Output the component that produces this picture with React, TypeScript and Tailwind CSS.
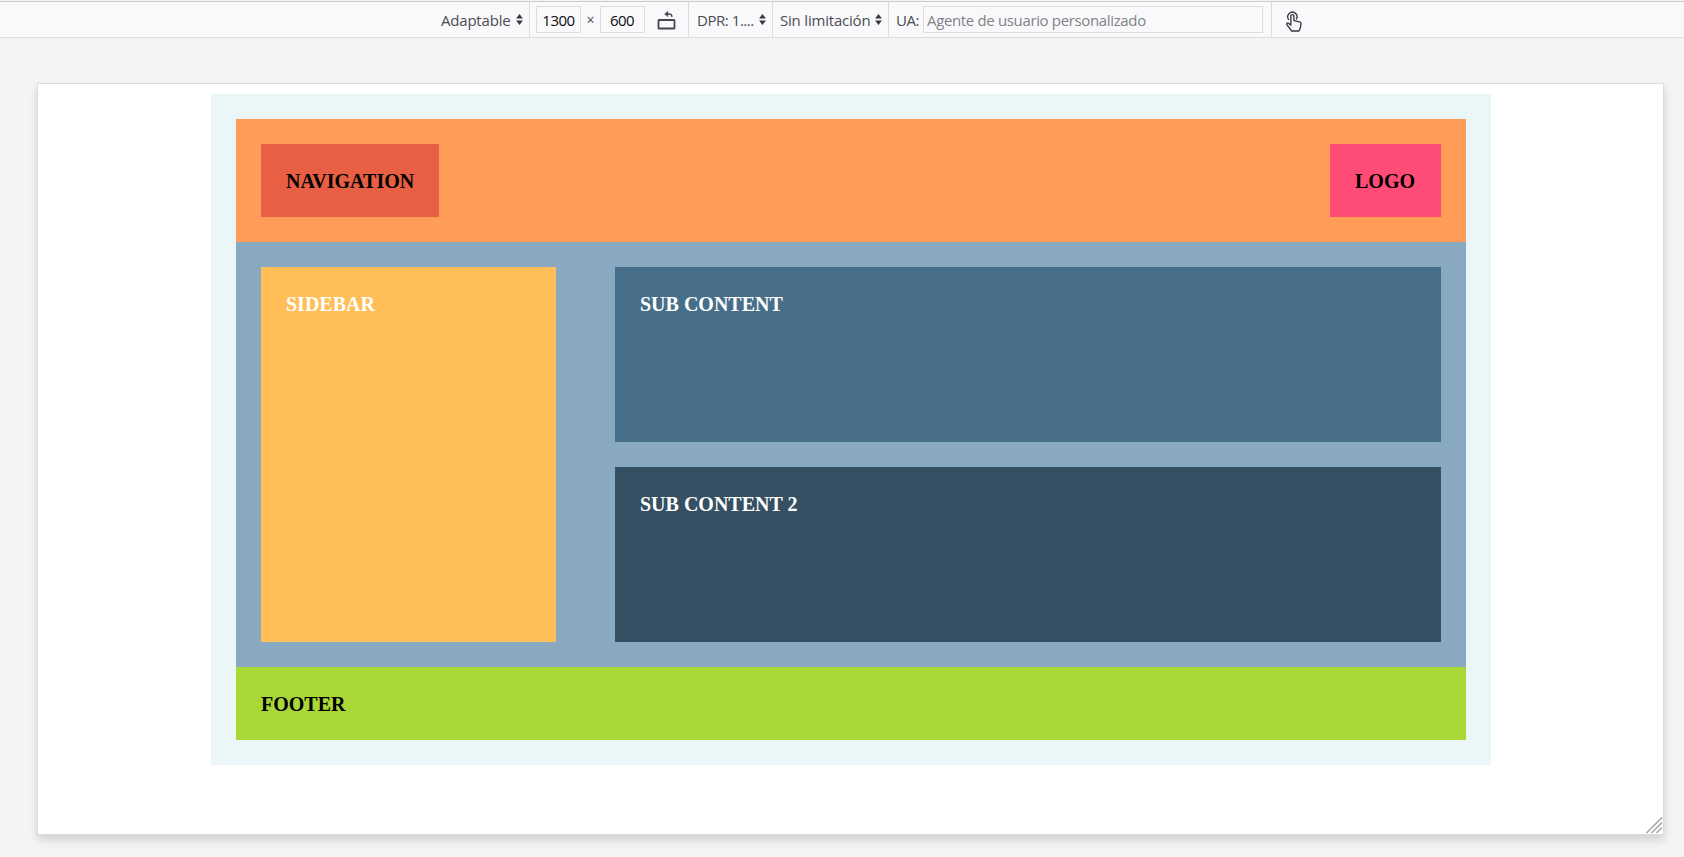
import React from 'react';

function SortArrows() {
  return (
    <svg className="w-[7px] h-[11px] shrink-0" viewBox="0 0 7 11" fill="#38383d">
      <path d="M3.5 0 6.9 4.4H.1zM3.5 11 .1 6.6h6.8z" />
    </svg>
  );
}

function RotateIcon() {
  return (
    <svg className="w-[19px] h-[19px]" viewBox="0 0 19 19" fill="none" stroke="#46464b">
      <rect x="1.5" y="9" width="16" height="8.5" rx="0.6" strokeWidth="1.8" />
      <path d="M9 3h3.2c1.9 0 2.8 1 2.8 3" strokeWidth="1.3" />
      <path d="M10.8.4 7.6 3l3.2 2.6z" fill="#46464b" strokeWidth=".5" />
    </svg>
  );
}

function TouchIcon() {
  return (
    <svg className="w-4 h-[21px]" viewBox="0 0 16 21" fill="none" stroke="#38383d" strokeWidth="1.35" strokeLinejoin="round" strokeLinecap="round">
      <path d="M2.6 8.4A4.6 4.6 0 1 1 10.4 8" />
      <path d="M4.9 13.3V5.1a1.5 1.5 0 0 1 3 0v4.6l5.7 1.2c1 .2 1.5.8 1.4 1.8l-.7 4.3-1.4 3H5.7L1 13.8c-.9-1.2.5-2.4 1.6-1.5l2.3 1.9" />
    </svg>
  );
}

function Resizer() {
  return (
    <svg className="absolute right-0 bottom-0 h-[17px] w-[17px]" viewBox="0 0 17 17" stroke="#a4a4a2" strokeWidth="1.5">
      <path d="M.5 16 16 .5M5.5 16 16 5.5M10.5 16 16 10.5" />
    </svg>
  );
}

function Toolbar() {
  return (
    <div className="mt-px flex h-[37px] items-stretch border-t border-b border-t-[#cbcbcb] border-b-[#dddde0] bg-[#f9f9fb] pl-[441px] font-['Open_Sans','Noto_Sans',sans-serif] text-[15px] leading-5 whitespace-nowrap text-[#4c4c50]">
      <div className="flex w-[89px] items-center border-r border-[#dddde0]">
        <span className="w-[75px] tracking-[-0.2px]">Adaptable</span>
        <SortArrows />
      </div>
      <div className="flex w-[159px] items-center border-r border-[#dddde0] pl-1.5">
        <span className="flex h-[27px] w-[45px] items-center justify-center border border-[#dddde0] tracking-[-0.5px] text-[#0c0c0d]">1300</span>
        <span className="w-[19px] text-center text-[14px]">×</span>
        <span className="flex h-[27px] w-[45px] items-center justify-center border border-[#dddde0] pr-px tracking-[-0.6px] text-[#0c0c0d]">600</span>
        <span className="mt-0.5 ml-3"><RotateIcon /></span>
      </div>
      <div className="flex w-[84px] items-center border-r border-[#dddde0] pl-2">
        <span className="w-[62px] tracking-[-0.45px]">DPR: 1....</span>
        <SortArrows />
      </div>
      <div className="flex w-[116px] items-center border-r border-[#dddde0] pl-[7px]">
        <span className="w-[95px] tracking-[-0.2px]">Sin limitación</span>
        <SortArrows />
      </div>
      <div className="flex w-[383px] items-center border-r border-[#dddde0] pl-[7px]">
        <span className="w-[27px] tracking-[-0.4px]">UA:</span>
        <span className="flex h-[27px] w-[340px] items-center border border-[#dddde0] pl-[3px] tracking-[-0.35px] text-[#828286]">Agente de usuario personalizado</span>
      </div>
      <div className="flex items-center pt-[3px] pl-3.5"><TouchIcon /></div>
    </div>
  );
}

export default function App() {
  return (
    <div className="h-[857px] w-[1684px] overflow-hidden bg-[#f4f4f6]">
      <Toolbar />
      <div className="relative mt-[45px] ml-[37px] h-[752px] w-[1627px] border border-[#dcdce0] bg-white pt-2.5 shadow-[0_5px_8px_rgba(0,0,0,0.14)]">
        <div className="ml-[173px] w-[1280px] bg-[#eaf6f8] p-[25px] font-['Liberation_Serif',serif] text-[20px] leading-[23px] font-bold text-black">
          <header className="flex justify-between bg-[#ff9c57] p-[25px]">
            <nav className="w-[178px] bg-[#e85f43] px-[25px] pt-[26px] pb-6">NAVIGATION</nav>
            <div className="w-[111px] bg-[#ff4c77] px-[25px] pt-[26px] pb-6">LOGO</div>
          </header>
          <main className="flex justify-between bg-[#88a9c0] p-[25px] text-white">
            <aside className="h-[375px] w-[295px] bg-[#ffbe57] px-[25px] pt-[26px]">SIDEBAR</aside>
            <div className="flex w-[826px] flex-col gap-[25px]">
              <section className="h-[175px] bg-[#486f89] px-[25px] pt-[26px]">SUB CONTENT</section>
              <section className="h-[175px] bg-[#365063] px-[25px] pt-[26px]">SUB CONTENT 2</section>
            </div>
          </main>
          <footer className="bg-[#a9d736] px-[25px] pt-[26px] pb-6">FOOTER</footer>
        </div>
        <Resizer />
      </div>
    </div>
  );
}
